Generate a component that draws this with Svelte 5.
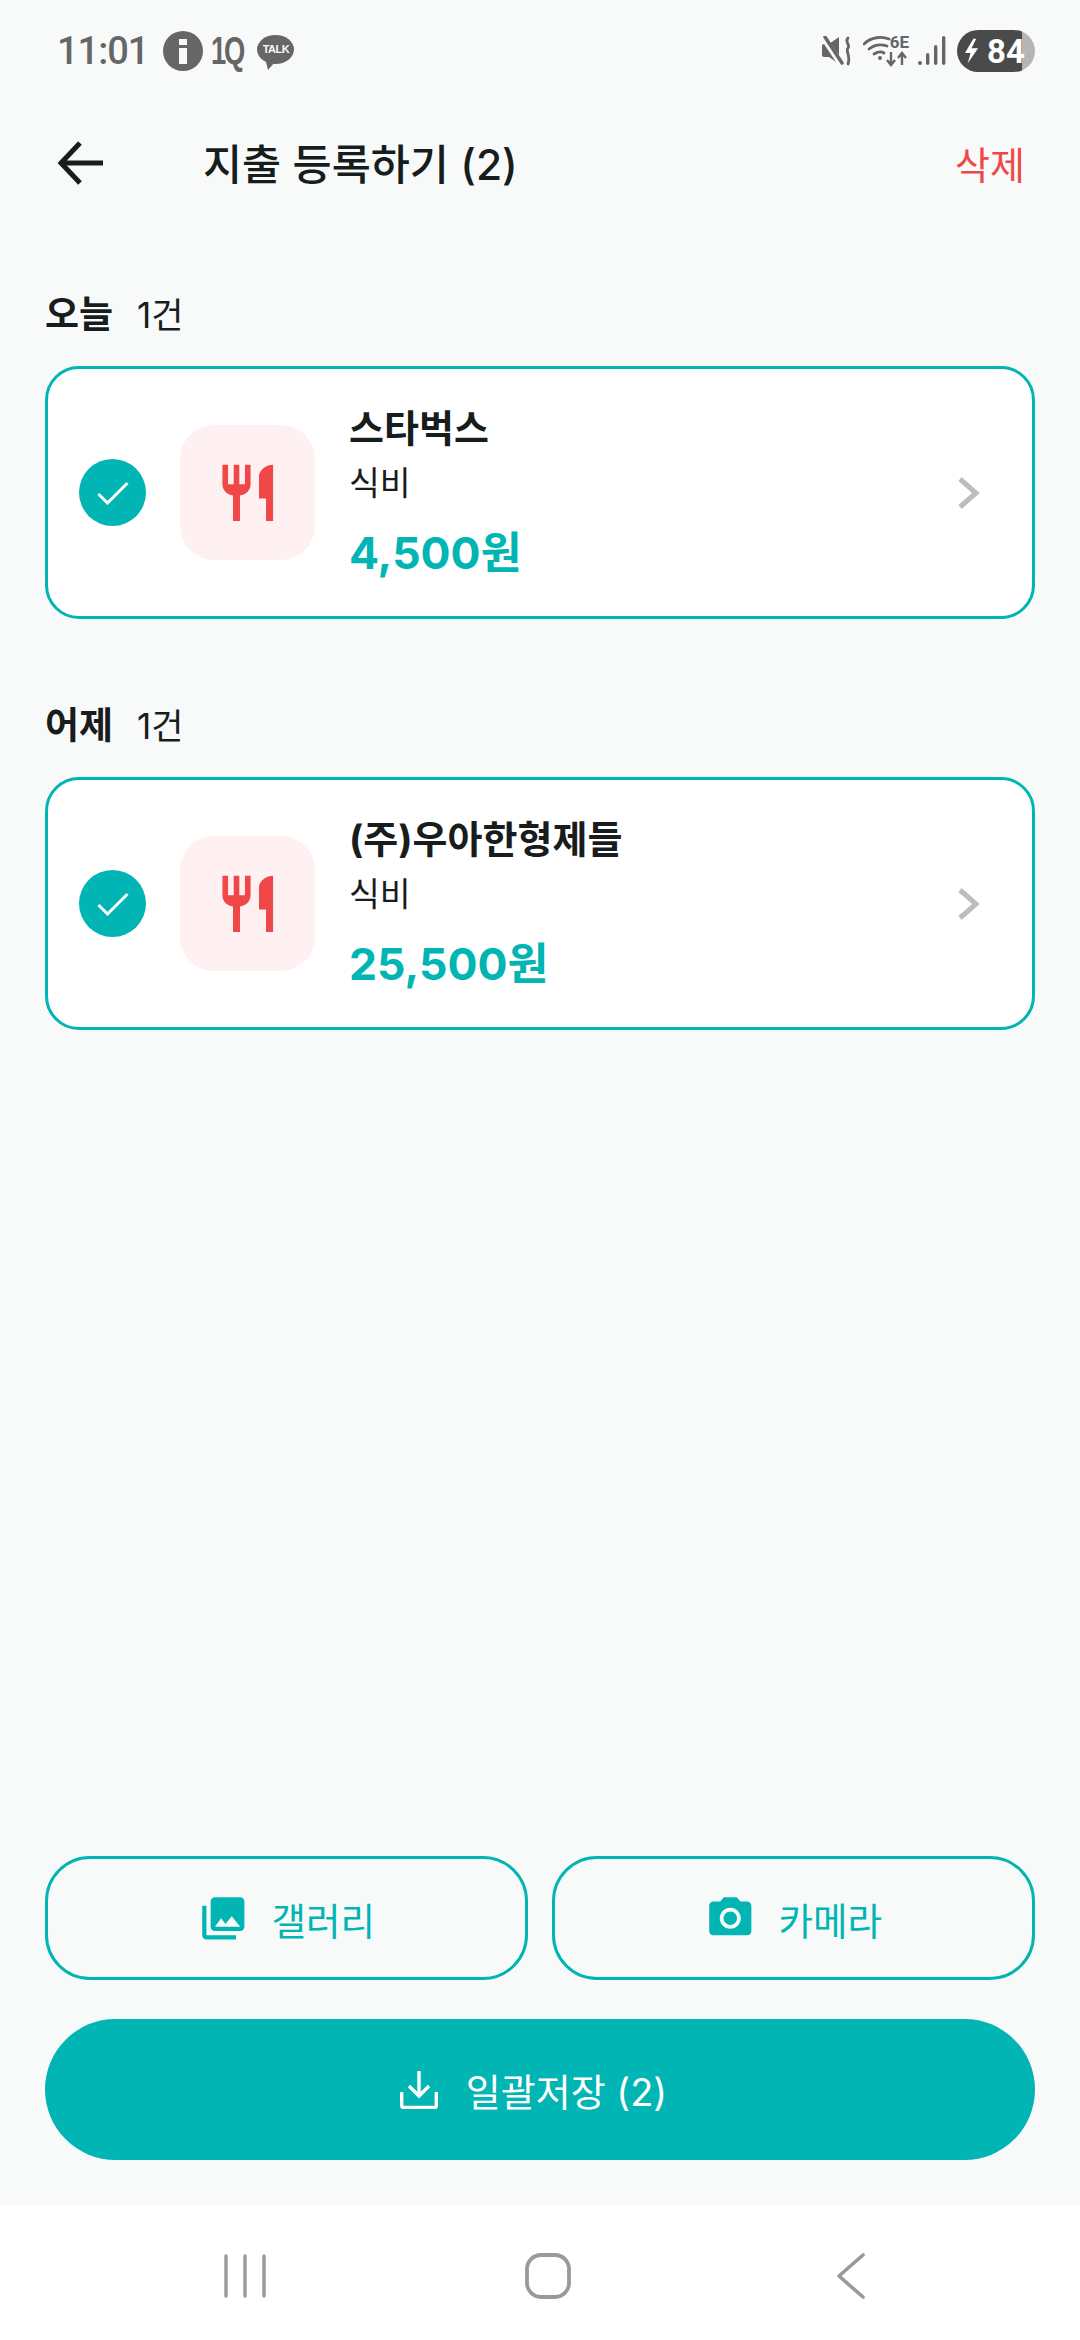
<script lang="ts">
  const restaurant = 'M11 9H9V2H7v7H5V2H3v7c0 2.12 1.66 3.84 3.75 3.97V22h2.5v-9.03C11.34 12.84 13 11.12 13 9V2h-2v7zm5-3v8h2.5v8H21V2c-2.76 0-5 2.24-5 4z';

  const sections = [
    { label: '오늘', count: '1건', name: '스타벅스', category: '식비', amount: '4,500원' },
    { label: '어제', count: '1건', name: '(주)우아한형제들', category: '식비', amount: '25,500원' },
  ];
</script>

<div class="screen">
  <div class="status">
    <div class="status-left">
      <span class="time">11:01</span>
      <svg class="ic-info" viewBox="0 0 40 40"><circle cx="20" cy="20" r="20" fill="#666" /><rect x="16" y="8" width="8" height="6" fill="#f8fafa" /><rect x="16" y="17" width="8" height="16" fill="#f8fafa" /></svg>
      <span class="oneq">1Q</span>
      <span class="talk"><span>TALK</span></span>
    </div>
    <div class="status-right">
      <svg class="ic-mute" viewBox="0 0 30 30">
        <path d="M0 10q0-2 2-2h5l10-7v27l-10-7H2q-2 0-2-2z" fill="#666" />
        <path d="M1 1l18 27" stroke="#f8fafa" stroke-width="6" />
        <path d="M3 1l17 26" stroke="#666" stroke-width="3.4" stroke-linecap="round" />
        <path d="M26 2c-4 4 3 7 0 10s3 7 0 16" fill="none" stroke="#666" stroke-width="2.8" stroke-linecap="round" />
      </svg>
      <span class="wifi">
        <svg viewBox="0 0 46 32">
          <path d="M1 9c7-7 18-8 25-5" fill="none" stroke="#666" stroke-width="2.8" stroke-linecap="round" />
          <path d="M6 14c5-4 12-5 18-3" fill="none" stroke="#666" stroke-width="2.8" stroke-linecap="round" />
          <path d="M11 19c3-2 7-3 10-1" fill="none" stroke="#666" stroke-width="2.8" stroke-linecap="round" />
          <circle cx="17" cy="23" r="2" fill="#666" />
          <path d="M28 17v12M24 25l4 5 4-5M39 30V19M35 23l4-5 4 5" fill="none" stroke="#666" stroke-width="2.4" />
        </svg>
        <span class="six-e">6E</span>
      </span>
      <svg class="ic-signal" viewBox="0 0 28 30" fill="#666">
        <rect x="0" y="25" width="4" height="4" rx="2" />
        <rect x="8" y="17" width="3.4" height="12" rx="1.7" />
        <rect x="16" y="9" width="3.4" height="20" rx="1.7" />
        <rect x="24" y="0" width="3.4" height="29" rx="1.7" />
      </svg>
      <div class="battery">
        <svg class="ic-bolt" viewBox="0 0 16 26"><path d="M10 0L1 15h6l-3 11 11-16H8l5-10z" fill="#fff" /></svg>
        <span>84</span>
      </div>
    </div>
  </div>

  <header class="header">
    <svg class="ic-back" viewBox="0 0 46 46"><path d="M46 23H4M23 3L4 23l19 20" fill="none" stroke="#171c1c" stroke-width="5" /></svg>
    <h1>지출 등록하기 (2)</h1>
    <span class="delete">삭제</span>
  </header>

  <main class="content">
    {#each sections as s}
      <section class="section">
        <div class="section-label"><strong>{s.label}</strong><span>{s.count}</span></div>
        <div class="card">
          <span class="check">
            <svg viewBox="0 0 32 24"><path d="M1.5 13l9 9L30.5 2" fill="none" stroke="#fff" stroke-width="3" /></svg>
          </span>
          <span class="tile">
            <svg viewBox="0 0 24 24"><path d={restaurant} fill="#f04848" /></svg>
          </span>
          <div class="info">
            <div class="name">{s.name}</div>
            <div class="category">{s.category}</div>
            <div class="amount">{s.amount}</div>
          </div>
          <svg class="chevron" viewBox="0 0 24 34"><path d="M3 3l16 14L3 31" fill="none" stroke="#bdbdbd" stroke-width="5" /></svg>
        </div>
      </section>
    {/each}
  </main>

  <div class="actions">
    <div class="row">
      <button class="outline">
        <svg viewBox="0 0 24 24"><path d="M22 16V4c0-1.1-.9-2-2-2H8c-1.1 0-2 .9-2 2v12c0 1.1.9 2 2 2h12c1.1 0 2-.9 2-2zm-11-4l2.03 2.71L16 11l4 5H8l3-4zM2 6v14c0 1.1.9 2 2 2h14v-2H4V6H2z" fill="#00b5b3" /></svg>
        갤러리
      </button>
      <button class="outline">
        <svg viewBox="0 0 24 24"><path fill-rule="evenodd" d="M12 15.2a3.2 3.2 0 1 0 0-6.4 3.2 3.2 0 0 0 0 6.4z M9 2L7.17 4H4c-1.1 0-2 .9-2 2v12c0 1.1.9 2 2 2h16c1.1 0 2-.9 2-2V6c0-1.1-.9-2-2-2h-3.17L15 2H9zm3 15c-2.76 0-5-2.24-5-5s2.24-5 5-5 5 2.24 5 5-2.24 5-5 5z" fill="#00b5b3" /></svg>
        카메라
      </button>
    </div>
    <button class="primary">
      <svg viewBox="0 0 38 38"><path d="M19 0v25M9 15l10 10 10-10M1.7 21v13.5q0 2 2 2h30.6q2 0 2-2V21" fill="none" stroke="#fff" stroke-width="3.4" /></svg>
      일괄저장 (2)
    </button>
  </div>

  <nav class="nav">
    <svg class="nav-bars" viewBox="0 0 42 44"><path d="M2 2v40M21 2v40M40 2v40" stroke="#999" stroke-width="3.4" stroke-linecap="round" /></svg>
    <svg class="nav-home" viewBox="0 0 46 46"><rect x="2" y="2" width="42" height="42" rx="14" fill="none" stroke="#999" stroke-width="3.8" /></svg>
    <svg class="nav-back" viewBox="0 0 30 46"><path d="M27 2L3 23l24 21" fill="none" stroke="#999" stroke-width="3.6" stroke-linecap="round" stroke-linejoin="round" /></svg>
  </nav>
</div>

<style>
  :global(body) {
    margin: 0;
    background: #f8fafa;
  }

  .screen {
    display: flex;
    flex-direction: column;
    height: 2340px;
    background: #f8fafa;
    color: #171c1c;
    font-family: Inter, "Noto Sans CJK KR", sans-serif;
  }

  .status {
    display: flex;
    align-items: center;
    justify-content: space-between;
    height: 102px;
    padding: 0 45px 0 57px;
    flex-shrink: 0;
    box-sizing: border-box;
  }

  .status-left,
  .status-right {
    display: flex;
    align-items: center;
  }

  .time {
    font-family: Roboto, sans-serif;
    font-size: 38px;
    font-weight: 500;
    color: #666;
    letter-spacing: -1px;
  }

  .ic-info {
    width: 40px;
    height: 40px;
    margin-left: 15px;
  }

  .oneq {
    width: 35px;
    margin-left: 8px;
    font-family: "Liberation Sans", sans-serif;
    font-size: 38px;
    font-weight: 700;
    color: #666;
    letter-spacing: -3px;
    transform: scaleX(0.72);
    transform-origin: left center;
  }

  .talk {
    position: relative;
    display: flex;
    align-items: center;
    justify-content: center;
    width: 37px;
    height: 29px;
    margin-left: 11px;
    margin-bottom: 4px;
    border-radius: 50%;
    background: #666;
  }

  .talk::after {
    content: '';
    position: absolute;
    left: 9px;
    bottom: -6px;
    border-left: 2px solid transparent;
    border-right: 7px solid transparent;
    border-top: 8px solid #666;
  }

  .talk span {
    font-family: "Liberation Sans", sans-serif;
    font-size: 11px;
    font-weight: 700;
    color: #f8fafa;
    letter-spacing: -0.5px;
  }

  .ic-mute {
    width: 30px;
    height: 30px;
  }

  .wifi {
    position: relative;
    width: 46px;
    height: 32px;
    margin-left: 11px;
  }

  .wifi svg {
    display: block;
    width: 46px;
    height: 32px;
  }

  .six-e {
    position: absolute;
    right: 0;
    top: -3px;
    font-family: Roboto, sans-serif;
    font-size: 17px;
    font-weight: 700;
    line-height: 20px;
    color: #666;
  }

  .ic-signal {
    width: 28px;
    height: 30px;
    margin-left: 9px;
  }

  .battery {
    display: flex;
    align-items: center;
    gap: 8px;
    width: 78px;
    height: 42px;
    margin-left: 11px;
    padding-left: 7px;
    box-sizing: border-box;
    border-radius: 21px;
    background: linear-gradient(to right, #4a4a4a 65px, #b5b5b5 65px);
    color: #fff;
    font-family: Roboto, sans-serif;
    font-size: 33px;
    font-weight: 700;
  }

  .ic-bolt {
    width: 15px;
    height: 26px;
    flex-shrink: 0;
  }

  .header {
    display: flex;
    align-items: center;
    height: 122px;
    padding: 0 56px 0 57px;
    flex-shrink: 0;
  }

  .ic-back {
    width: 46px;
    height: 46px;
    flex-shrink: 0;
  }

  .header h1 {
    flex: 1;
    margin: 0 0 4px 100px;
    font-size: 42.5px;
    font-weight: 500;
  }

  .delete {
    margin: 0 -1px 2px 0;
    font-size: 38px;
    color: #f04848;
  }

  .content {
    flex: 1;
    display: flex;
    flex-direction: column;
    gap: 84px;
    padding: 68px 45px 0;
  }

  .section-label {
    display: flex;
    align-items: baseline;
    gap: 24px;
    height: 46px;
    margin-bottom: 28px;
    line-height: 46px;
  }

  .section-label strong {
    font-size: 37px;
    font-weight: 600;
  }

  .section-label span {
    font-size: 35px;
  }

  .card {
    display: flex;
    align-items: center;
    height: 253px;
    padding: 0 51px 0 31px;
    box-sizing: border-box;
    border: 3px solid #00b5b3;
    border-radius: 34px;
    background: #fff;
  }

  .check {
    display: flex;
    align-items: center;
    justify-content: center;
    width: 67px;
    height: 67px;
    border-radius: 50%;
    background: #00b5b3;
    flex-shrink: 0;
  }

  .check svg {
    width: 32px;
    height: 24px;
  }

  .tile {
    display: flex;
    align-items: center;
    justify-content: center;
    width: 135px;
    height: 135px;
    margin-left: 34px;
    border-radius: 34px;
    background: #fff1f1;
    flex-shrink: 0;
  }

  .tile svg {
    width: 67.5px;
    height: 67.5px;
  }

  .info {
    flex: 1;
    margin-left: 34px;
  }

  .name {
    font-size: 38px;
    font-weight: 700;
    line-height: 52px;
  }

  .category {
    margin-top: 6px;
    font-size: 33.5px;
    line-height: 46px;
  }

  .amount {
    margin-top: 17px;
    font-size: 44.5px;
    font-weight: 700;
    line-height: 60px;
    color: #00b5b3;
  }

  .chevron {
    width: 24px;
    height: 34px;
    flex-shrink: 0;
  }

  .actions {
    display: flex;
    flex-direction: column;
    gap: 39px;
    padding: 0 45px 45px;
    flex-shrink: 0;
  }

  .row {
    display: flex;
    gap: 24px;
  }

  button {
    display: flex;
    align-items: center;
    justify-content: center;
    font-family: inherit;
    cursor: pointer;
  }

  .outline {
    flex: 1;
    gap: 23px;
    height: 124px;
    border: 3px solid #00b5b3;
    border-radius: 45px;
    background: transparent;
    color: #00b5b3;
    font-size: 37.5px;
  }

  .outline svg {
    width: 50.6px;
    height: 50.6px;
  }

  .primary {
    gap: 28px;
    height: 141px;
    padding-right: 19px;
    border: none;
    border-radius: 71px;
    background: #00b5b3;
    color: #fff;
    font-size: 38px;
  }

  .primary svg {
    width: 38px;
    height: 38px;
  }

  .nav {
    display: flex;
    align-items: center;
    justify-content: space-between;
    height: 135px;
    padding: 6px 214px 0 224px;
    box-sizing: border-box;
    background: #fff;
    flex-shrink: 0;
  }

  .nav-bars {
    width: 42px;
    height: 44px;
  }

  .nav-home {
    width: 46px;
    height: 46px;
    margin-right: 7px;
  }

  .nav-back {
    width: 30px;
    height: 46px;
  }
</style>
